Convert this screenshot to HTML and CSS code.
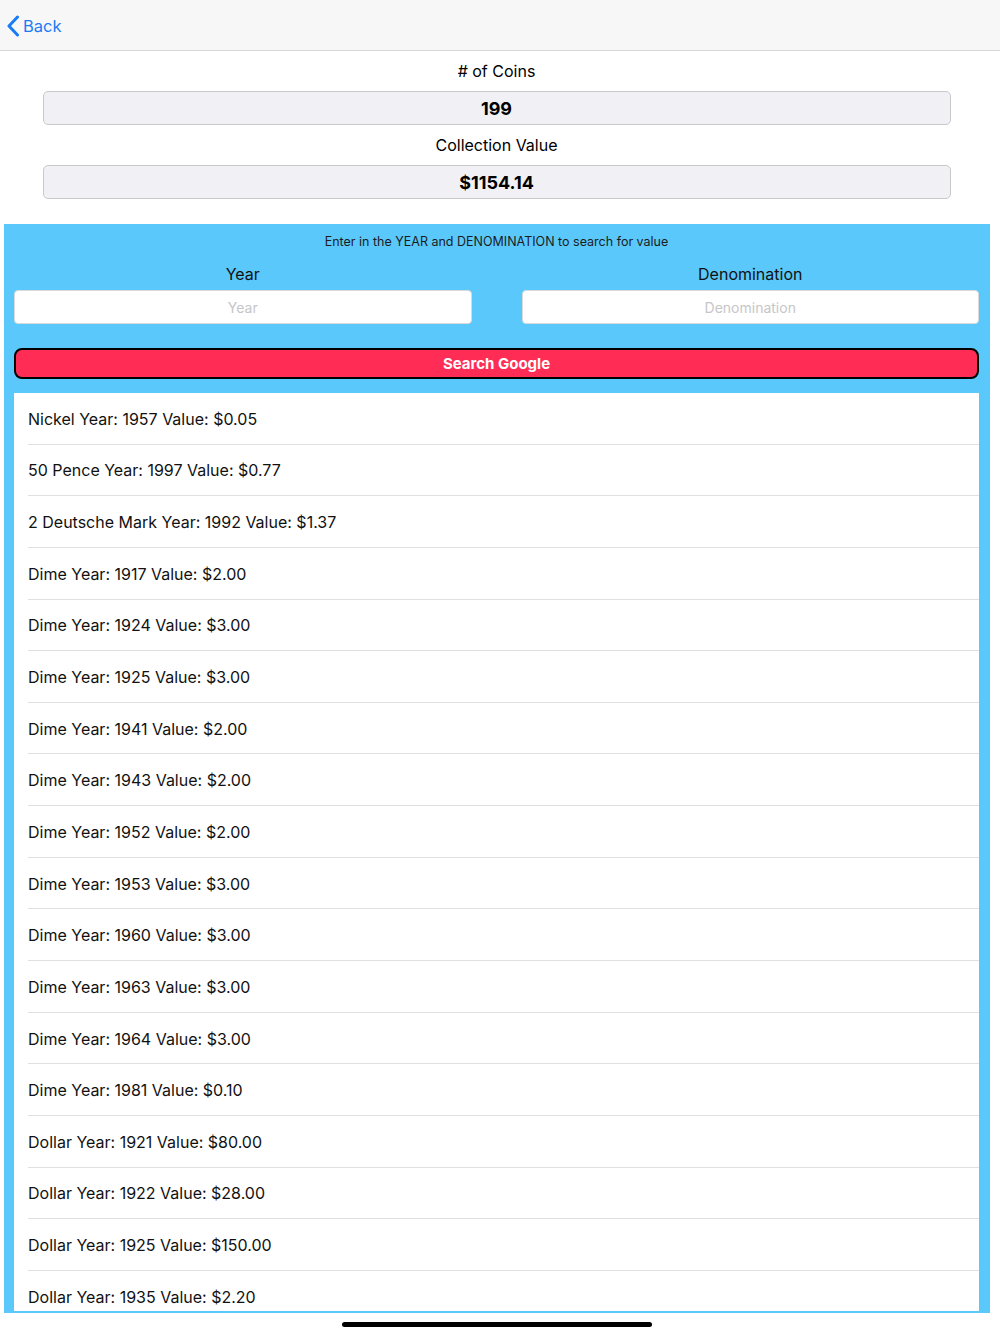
FILE: index.html
```html
<!DOCTYPE html>
<html>
<head>
<meta charset="utf-8">
<link rel="stylesheet" href="styles.css">
</head>
<body>
<div class="app">
  <header class="navbar">
    <a class="back">
      <svg class="chev" width="14" height="22" viewBox="0 0 14 22"><path d="M11.5 2 L3 11 L11.5 20" fill="none" stroke="#1a7cf5" stroke-width="3" stroke-linecap="round" stroke-linejoin="round"/></svg>
      <span>Back</span>
    </a>
  </header>
  <section class="summary">
    <div class="label">#&nbsp;of Coins</div>
    <div class="valuebox">199</div>
    <div class="label">Collection Value</div>
    <div class="valuebox">$1154.14</div>
  </section>
  <section class="panel">
    <div class="hint">Enter in the YEAR and DENOMINATION to search for value</div>
    <div class="fields">
      <div class="field">
        <div class="flabel">Year</div>
        <div class="input">Year</div>
      </div>
      <div class="field">
        <div class="flabel">Denomination</div>
        <div class="input">Denomination</div>
      </div>
    </div>
    <div class="button">Search Google</div>
    <ul class="list">
      <li>Nickel Year: 1957 Value: $0.05</li>
      <li>50 Pence Year: 1997 Value: $0.77</li>
      <li>2 Deutsche Mark Year: 1992 Value: $1.37</li>
      <li>Dime Year: 1917 Value: $2.00</li>
      <li>Dime Year: 1924 Value: $3.00</li>
      <li>Dime Year: 1925 Value: $3.00</li>
      <li>Dime Year: 1941 Value: $2.00</li>
      <li>Dime Year: 1943 Value: $2.00</li>
      <li>Dime Year: 1952 Value: $2.00</li>
      <li>Dime Year: 1953 Value: $3.00</li>
      <li>Dime Year: 1960 Value: $3.00</li>
      <li>Dime Year: 1963 Value: $3.00</li>
      <li>Dime Year: 1964 Value: $3.00</li>
      <li>Dime Year: 1981 Value: $0.10</li>
      <li>Dollar Year: 1921 Value: $80.00</li>
      <li>Dollar Year: 1922 Value: $28.00</li>
      <li>Dollar Year: 1925 Value: $150.00</li>
      <li>Dollar Year: 1935 Value: $2.20</li>
    </ul>
  </section>
  <div class="home"><div class="indicator"></div></div>
</div>
</body>
</html>
```
FILE: styles.css
```css
* { box-sizing: border-box; }
html, body { margin: 0; padding: 0; background: #fff; }
body { font-family: Inter, "Noto Sans", sans-serif; color: #000; width: 1000px; height: 1334px; overflow: hidden; }
.app { display: flex; flex-direction: column; height: 1334px; }
.navbar { height: 51px; background: #f7f7f7; border-bottom: 1px solid #d6d6d6; display: flex; align-items: center; padding-left: 6px; flex: none; }
.back { display: flex; align-items: center; gap: 3px; color: #1a7cf5; font-size: 16.5px; padding-top: 1px; }
.chev { display: block; }
.summary { display: flex; flex-direction: column; align-items: center; padding: 9px 7px 0 0; flex: none; }
.label { font-size: 16px; height: 22px; line-height: 22px; margin-bottom: 9px; }
.valuebox { width: 908px; height: 34px; background: #f1f1f5; border: 1px solid #c9c9cc; border-radius: 5px; display: flex; align-items: center; justify-content: center; font-weight: 700; font-size: 18px; margin-bottom: 9px; }
.panel { margin: 16px 10px 0 4px; background: #5ac8fa; padding: 0 11px 2px 10px; height: 1089px; overflow: hidden; display: flex; flex-direction: column; flex: none; }
.hint { font-size: 12.5px; text-align: center; color: #1c1c1e; height: 18px; line-height: 18px; margin-top: 9px; }
.fields { display: flex; gap: 50px; margin-top: 12px; }
.field { flex: 1; display: flex; flex-direction: column; align-items: center; }
.flabel { font-size: 16px; height: 22px; line-height: 22px; color: #111; }
.input { width: 100%; height: 34px; background: #fff; border: 1px solid #d9d9d9; border-radius: 4px; display: flex; align-items: center; justify-content: center; color: #c6c6c8; font-size: 14px; margin-top: 5px; }
.button { margin-top: 24px; height: 31px; background: #ff2d55; border: 2px solid #000; border-radius: 8px; color: #fff; font-weight: 700; font-size: 15px; display: flex; align-items: center; justify-content: center; flex: none; }
.list { list-style: none; margin: 14px 0 0; padding: 0; background: #fff; flex: 1; overflow: hidden; }
.list li { height: 51.65px; margin-left: 14px; border-bottom: 1px solid #e0e0e0; display: flex; align-items: center; font-size: 16px; color: #111; padding-top: 1px; }
.home { flex: 1; display: flex; justify-content: center; padding: 9px 7px 0 0; }
.indicator { width: 310px; height: 5px; background: #000; border-radius: 3px; }
```
